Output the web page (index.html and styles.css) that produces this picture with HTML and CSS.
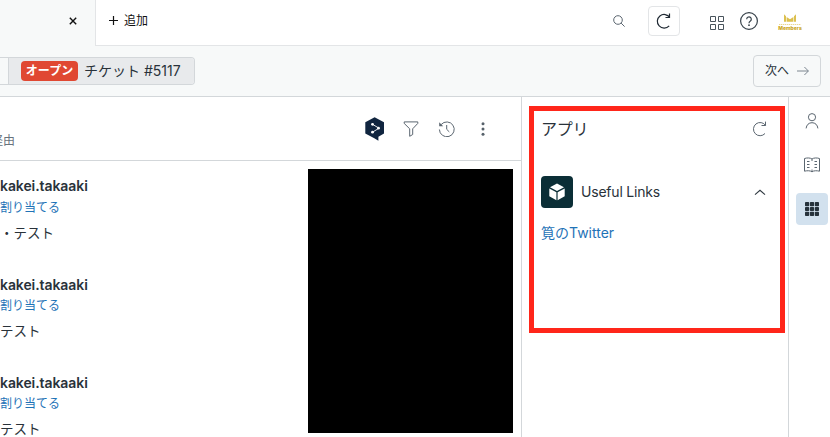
FILE: index.html
```html
<!DOCTYPE html>
<html lang="ja">
<head>
<meta charset="utf-8">
<title>チケット #5117</title>
<link rel="stylesheet" href="styles.css">
</head>
<body>
<header class="topbar">
  <div class="tab">
    <svg class="close" width="8" height="8" viewBox="0 0 8 8"><path d="M.8.8l6.4 6.4M7.2.8L.8 7.2"/></svg>
  </div>
  <div class="topbar-rest">
    <button class="add"><svg width="9" height="9" viewBox="0 0 9 9"><path d="M4.5 0v9M0 4.5h9"/></svg><span>追加</span></button>
    <div class="tools">
      <svg class="search" width="12" height="12" viewBox="0 0 12 12"><circle cx="5" cy="5" r="4.3"/><path d="M8.1 8.1l3.5 3.5"/></svg>
      <button class="reload"><svg width="16" height="16" viewBox="0 0 16 16"><path d="M13.2 12.8A6.8 6.8 0 1 1 13.8 4.5M13.5.5v4h-4"/></svg></button>
      <svg class="products" width="14" height="14" viewBox="0 0 14 14"><path d="M.5.5h5v5h-5zM8.5.5h5v5h-5zM.5 8.5h5v5h-5zM8.5 8.5h5v5h-5z"/></svg>
      <svg class="help" width="18" height="18" viewBox="0 0 18 18"><circle cx="9" cy="9" r="8.4"/><path d="M6.7 7.2a2.3 2.3 0 1 1 3.7 1.8C9.4 9.7 9 10 9 11.2"/><circle class="dot" cx="9" cy="13.2" r=".9"/></svg>
      <div class="brand">
        <svg width="12" height="8" viewBox="0 0 12 8"><path d="M0 .3L2 2.2v5.5H0zM12 .3l-2 1.900v5.500h2zM2.600 3L6 5.300 9.400 3v4.700H2.600z"/></svg>
        <i></i>
        <span>Members</span>
      </div>
    </div>
  </div>
</header>
<nav class="crumbs">
  <div class="crumb-group">
    <span class="crumb-prev"></span>
    <span class="crumb"><b class="status">オープン</b><span>チケット #5117</span></span>
  </div>
  <button class="next"><span>次へ</span><svg width="12" height="10" viewBox="0 0 12 10"><path d="M0 5h11.3M7.4 1l4 4-4 4"/></svg></button>
</nav>
<div class="workspace">
  <main class="ticket">
    <div class="ticket-head">
      <span class="via">経由</span>
      <div class="actions">
        <svg class="badge" width="20" height="24" viewBox="0 0 20 24"><path class="shape" d="M9.6.2L19 5.3v11.2l-5.600 3.200v4L9.300 21.200.3 16.600V5.300z"/><path class="link" d="M7.300 7.200L14 11.200 7.300 15.300"/><circle cx="7.500" cy="7.300" r="1.400"/><circle cx="13.500" cy="11.200" r="1.400"/><circle cx="7.500" cy="15.200" r="1.400"/></svg>
        <svg class="filter" width="16" height="16" viewBox="0 0 16 16"><path d="M1.200.9h13.600v1.500L9.700 7.800v5.700l-3 1.800V7.800L1.200 2.400z"/></svg>
        <svg class="history" width="17" height="16" viewBox="0 0 17 16"><path d="M3.200 3.500A7.400 7.400 0 1 1 1.400 8.500M8.700 4v4.300l2.600 2.600"/><path class="tip" d="M1.200 1.200v4h4z"/></svg>
        <svg class="more" width="4" height="14" viewBox="0 0 4 14"><circle cx="2" cy="1.700" r="1.500"/><circle cx="2" cy="7" r="1.500"/><circle cx="2" cy="12.300" r="1.500"/></svg>
      </div>
    </div>
    <div class="ticket-body">
      <div class="messages">
        <article class="message first"><h2>kakei.takaaki</h2><a>割り当てる</a><p>・テスト</p></article>
        <article class="message"><h2>kakei.takaaki</h2><a>割り当てる</a><p>テスト</p></article>
        <article class="message"><h2>kakei.takaaki</h2><a>割り当てる</a><p>テスト</p></article>
      </div>
      <div class="redacted"></div>
    </div>
  </main>
  <aside class="apps">
    <section class="apps-box">
      <div class="apps-head"><h1>アプリ</h1><svg width="16" height="16" viewBox="0 0 16 16"><path d="M13 12.500A6.600 6.600 0 1 1 13.600 4.500M13.500.600v3.900H9.500"/></svg></div>
      <div class="app-row">
        <span class="app-icon"><svg width="16" height="18" viewBox="0 0 16 18"><path d="M8 .5l7 3.800-7 3.800-7-3.800zM.3 5.400l7.100 3.900v8L.3 13.300zM15.700 5.400v7.900l-7.100 4v-8z"/></svg></span>
        <span class="app-name">Useful Links</span>
        <svg class="chevron" width="12" height="7" viewBox="0 0 12 7"><path d="M1 5.700L6 1.300l5 4.400"/></svg>
      </div>
      <a class="app-link">筧のTwitter</a>
    </section>
  </aside>
  <nav class="rail">
    <span class="rail-item"><svg width="14" height="16" viewBox="0 0 14 16"><circle cx="7" cy="4.200" r="3.600"/><path d="M1.100 15.400C1.500 11.800 3.800 9.700 7 9.700s5.500 2.100 5.900 5.700"/></svg></span>
    <span class="rail-item"><svg width="16" height="16" viewBox="0 0 16 16"><path d="M.5 1.500C3 .7 6.300.7 8 2 9.700.7 13 .7 15.500 1.500v12.700C13 13.500 9.700 13.500 8 14.800 6.300 13.500 3 13.500.5 14.200zM8 2v2M8 12.500v2M3 4.500h2.500M3 7.500h2.500M3 10.500h2.500M10.500 4.500H13M10.500 7.500H13M10.500 10.500H13"/></svg></span>
    <span class="rail-item active"><svg width="14" height="14" viewBox="0 0 14 14"><g><rect width="4.200" height="4.200" rx=".8"/><rect x="4.900" width="4.200" height="4.200" rx=".8"/><rect x="9.800" width="4.200" height="4.200" rx=".8"/><rect y="4.900" width="4.200" height="4.200" rx=".8"/><rect x="4.900" y="4.900" width="4.200" height="4.200" rx=".8"/><rect x="9.800" y="4.900" width="4.200" height="4.200" rx=".8"/><rect y="9.800" width="4.200" height="4.200" rx=".8"/><rect x="4.900" y="9.800" width="4.200" height="4.200" rx=".8"/><rect x="9.800" y="9.800" width="4.200" height="4.200" rx=".8"/></g></svg></span>
  </nav>
</div>
</body>
</html>
```
FILE: styles.css
```css
* { box-sizing: border-box; }
body {
  margin: 0;
  width: 830px;
  height: 437px;
  overflow: hidden;
  background: #fff;
  color: #29323a;
  font: 14px/20px Inter, "Noto Sans CJK JP", sans-serif;
}
button { margin: 0; padding: 0; border: 0; background: none; color: inherit; font: inherit; }
h1, h2, p { margin: 0; }
svg { display: block; flex: none; fill: none; stroke: #5b6670; }

.topbar { display: flex; height: 46px; background: #f7f9f9; }
.tab { display: flex; align-items: center; width: 95px; padding: 0 18px 4px 0; justify-content: flex-end; }
.close { stroke: #111; stroke-width: 1.4; }
.topbar-rest {
  display: flex;
  flex: 1;
  justify-content: space-between;
  background: #fff;
  border-left: 1px solid #e3e5e7;
  border-bottom: 1px solid #e3e5e7;
}
.add { display: flex; align-items: center; gap: 6px; height: 40px; margin-left: 13px; color: #111; font-size: 12px; }
.add svg { stroke: #111; stroke-width: 1.2; }
.add span { padding-top: 2px; }
.tools { display: flex; align-items: center; height: 42px; padding-right: 29px; }
.reload {
  display: flex;
  align-items: center;
  justify-content: center;
  width: 32px;
  height: 30px;
  margin: 0 30px 0 23px;
  border: 1px solid #e3e5e7;
  border-radius: 4px;
}
.reload svg { stroke: #1f2933; stroke-width: 1.2; }
.products { margin: 4px 16px 0 0; stroke: #49545c; }
.help { margin-right: 21px; stroke: #38434b; stroke-width: 1.2; }
.help .dot { fill: #38434b; stroke: none; }
.brand { display: flex; flex-direction: column; align-items: center; width: 22px; margin-top: 3px; }
.brand svg { fill: #dcc04f; stroke: none; }
.brand i { width: 22px; height: 1px; margin: 2px 0 0; background: repeating-linear-gradient(90deg, #e9d891 0 1px, #f8f1d8 1px 2px); }
.brand span { color: #cba61e; font-size: 5px; font-weight: 800; line-height: 7px; }

.crumbs {
  display: flex;
  justify-content: space-between;
  align-items: center;
  height: 51px;
  padding-right: 9px;
  background: #f7f9f9;
  border-bottom: 1px solid #d3d7da;
}
.crumb-group {
  display: flex;
  height: 28px;
  overflow: hidden;
  border: 1px solid #d3d7da;
  border-left: 0;
  border-radius: 0 4px 4px 0;
}
.crumb-prev { width: 9px; border-right: 1px solid #d3d7da; }
.crumb { display: flex; align-items: center; gap: 6px; width: 185px; padding-left: 12px; background: #e8eaec; white-space: nowrap; }
.status { height: 20px; width: 57px; border-radius: 4px; background: #e04832; color: #fff; font-size: 12px; line-height: 20px; text-align: center; }
.next {
  display: flex;
  align-items: center;
  gap: 8px;
  width: 68px;
  height: 32px;
  padding: 0 0 1px 11px;
  border: 1px solid #d3d7da;
  border-radius: 4px;
  font-size: 12px;
}
.next svg { stroke: #7c868f; }

.workspace { display: flex; height: 340px; overflow: hidden; }
.ticket { display: flex; flex-direction: column; width: 522px; border-right: 1px solid #d3d7da; }
.ticket-head {
  display: flex;
  justify-content: space-between;
  height: 64px;
  border-bottom: 1px solid #d3d7da;
}
.via { margin: 34px 0 0 -9px; color: #68737d; font-size: 12px; }
.actions { display: flex; align-items: center; height: 64px; padding-right: 36px; }
.badge { margin-right: 18px; }
.badge .shape { fill: #10253f; stroke: none; }
.badge .link { stroke: #fff; stroke-width: .9; }
.badge circle { fill: #fff; stroke: none; }
.filter { margin-right: 19px; }
.history { margin-right: 26px; }
.history .tip { fill: #5b6670; stroke: none; }
.more { fill: #56616a; stroke: none; }
.ticket-body { display: flex; justify-content: space-between; height: 276px; padding: 8px 8px 0 0; }
.redacted { width: 205px; height: 264px; background: #000; }
.messages { height: 268px; padding-top: 7px; overflow: hidden; }
.message { height: 98px; }
.message.first { height: 99px; }
.message h2 { font-size: 14px; font-weight: 600; line-height: 20px; letter-spacing: -.08px; }
.message a { display: block; padding-top: 1px; color: #1f73b7; font-size: 12px; line-height: 20px; }
.message p { margin-top: 5px; font-size: 13.5px; }
.message.first a { padding-top: 2px; }

.apps { width: 267px; padding: 9px 3px 0 7px; border-right: 1px solid #d3d7da; }
.apps-box { height: 227px; padding: 7px 12px 0 7px; border: 5px solid #ff261a; }
.apps-head { display: flex; justify-content: space-between; align-items: center; height: 22px; }
.apps-head h1 { font-size: 16px; font-weight: 400; line-height: 22px; letter-spacing: -.2px; }
.app-row { display: flex; align-items: center; margin-top: 36px; }
.app-icon { display: flex; align-items: center; justify-content: center; width: 32px; height: 32px; border-radius: 4px; background: #0b2e36; }
.app-icon svg { fill: #fff; stroke: none; }
.app-name { flex: 1; padding-left: 8px; letter-spacing: -.2px; }
.chevron { margin-right: 2px; stroke: #2f3941; stroke-width: 1.1; }
.app-link { display: block; margin-top: 15px; color: #1f73b7; }

.rail { display: flex; flex-direction: column; gap: 12px; padding: 8px 0 0 7px; }
.rail-item { display: flex; align-items: center; justify-content: center; width: 32px; height: 32px; border-radius: 4px; }
.rail-item.active { background: #d2e1ee; }
.active svg { fill: #26323b; stroke: none; }
```
